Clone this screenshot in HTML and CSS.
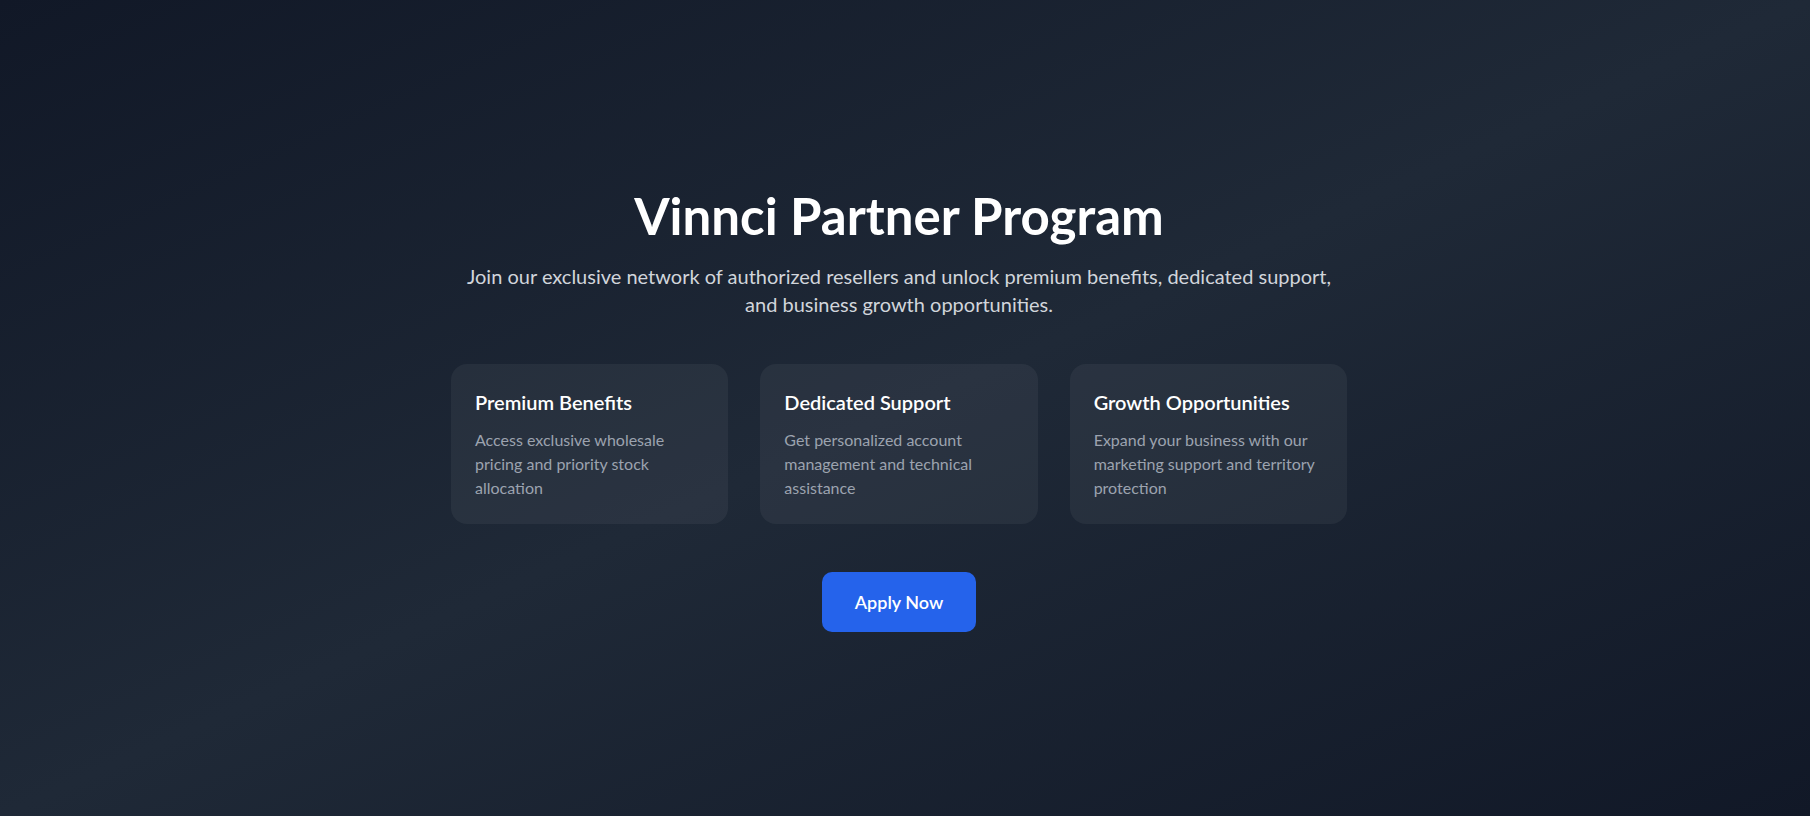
FILE: index.html
```html
<!DOCTYPE html>
<html lang="en">
<head>
<meta charset="utf-8">
<title>Vinnci Partner Program</title>
<link rel="stylesheet" href="styles.css">
</head>
<body>
<section class="hero">
  <div class="container">
    <h1 class="title">Vinnci Partner Program</h1>
    <p class="subtitle">Join our exclusive network of authorized resellers and unlock premium benefits, dedicated support, and business growth opportunities.</p>
    <div class="cards">
      <div class="card">
        <h3 class="card-title">Premium Benefits</h3>
        <p class="card-text">Access exclusive wholesale pricing and priority stock allocation</p>
      </div>
      <div class="card">
        <h3 class="card-title">Dedicated Support</h3>
        <p class="card-text">Get personalized account management and technical assistance</p>
      </div>
      <div class="card">
        <h3 class="card-title">Growth Opportunities</h3>
        <p class="card-text">Expand your business with our marketing support and territory protection</p>
      </div>
    </div>
    <button class="apply">Apply Now</button>
  </div>
</section>
</body>
</html>
```

FILE: styles.css
```css
* { box-sizing: border-box; }
html, body { margin: 0; padding: 0; }
body {
  font-family: Lato, "Open Sans", "Liberation Sans", sans-serif;
  color: #fff;
}
.hero {
  min-height: 816px;
  display: flex;
  align-items: center;
  justify-content: center;
  padding: 5px 12px 0 0;
  background: linear-gradient(to bottom right, #111827, #1f2937, #111827);
}
.container {
  width: 896px;
  display: flex;
  flex-direction: column;
  align-items: center;
  text-align: center;
}
.title {
  margin: 0 0 20px;
  font-size: 51px;
  line-height: 52px;
  font-weight: 700;
  color: #fff;
}
.subtitle {
  margin: 0 0 46px;
  font-size: 20px;
  line-height: 28px;
  color: #d1d5db;
}
.cards {
  width: 100%;
  display: grid;
  grid-template-columns: repeat(3, 1fr);
  gap: 32px;
  margin-bottom: 48px;
  text-align: left;
}
.card {
  background: rgba(255, 255, 255, 0.05);
  border-radius: 16px;
  padding: 24px;
}
.card-title {
  margin: 0 0 12px;
  font-size: 20px;
  line-height: 28px;
  font-weight: 600;
  color: #fff;
}
.card-text {
  margin: 0;
  font-size: 16px;
  line-height: 24px;
  color: #9ca3af;
}
.apply {
  font-family: inherit;
  border: 0;
  background: #2563eb;
  color: #fff;
  font-size: 18px;
  line-height: 28px;
  font-weight: 600;
  padding: 16px 33px;
  border-radius: 10px;
  cursor: pointer;
}
```
